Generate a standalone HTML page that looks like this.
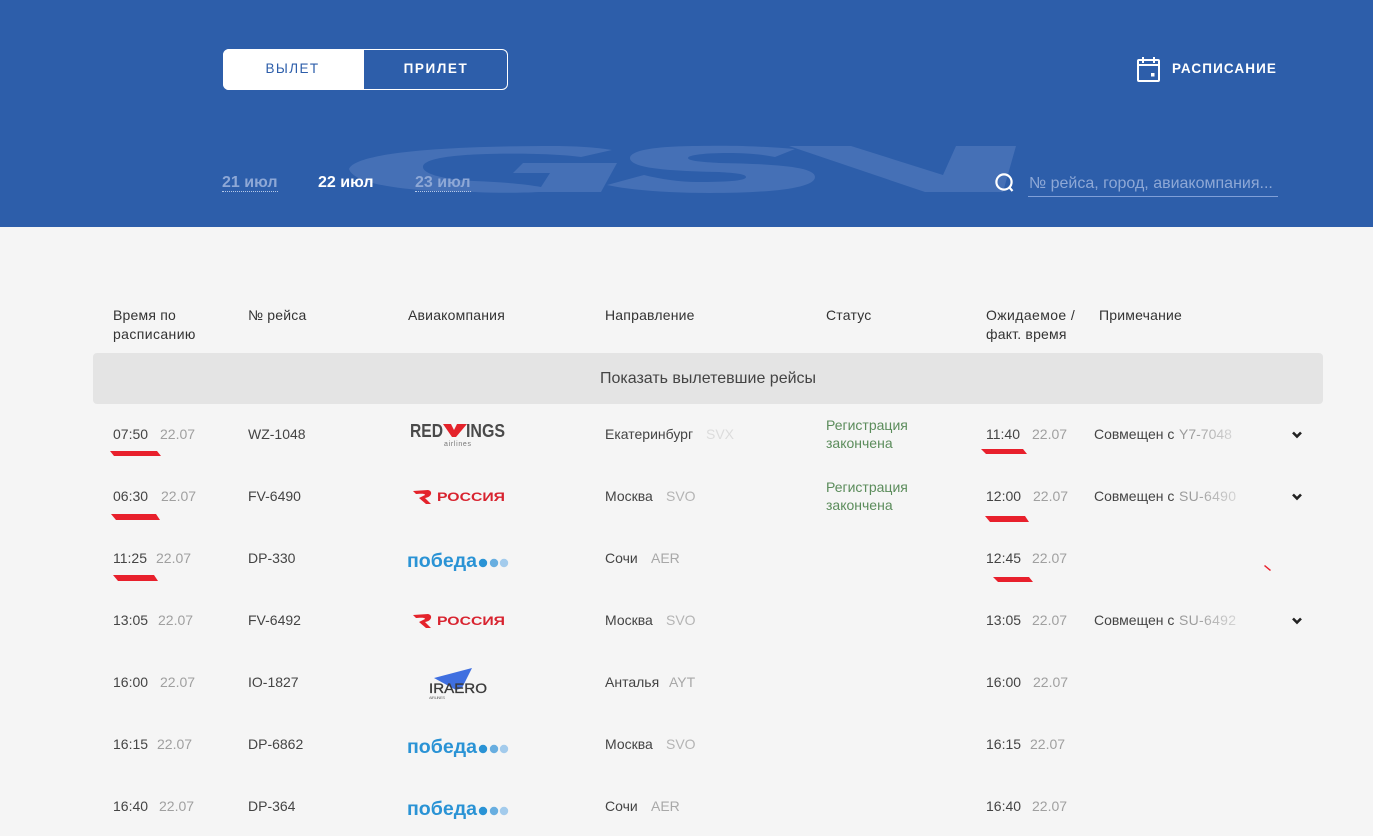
<!DOCTYPE html>
<html lang="ru"><head><meta charset="utf-8"><title>Табло</title>
<style>
html,body{margin:0;padding:0;background:#f5f5f5}
body{width:1373px;height:836px;overflow:hidden;position:relative;font-family:"Liberation Sans",sans-serif;font-size:14px;color:#444}
.a{position:absolute;white-space:nowrap;line-height:18px}
.g{color:#a0a0a0}.h{color:#333;letter-spacing:.2px}
.st{color:#5b8c5b}
.n{background:linear-gradient(90deg,#9a9a9a 0,#9a9a9a 25%,#d4d4d4 100%);-webkit-background-clip:text;background-clip:text;color:transparent;letter-spacing:.3px}
svg{position:absolute;overflow:visible}
.d{font-size:16px;font-weight:bold;color:#8ea8d6;top:174px;line-height:17px;border-bottom:1px dotted #b5c8e8;height:17px}
</style></head><body>
<div style="position:absolute;left:0;top:0;width:1373px;height:227px;background:#2d5eaa"></div>
<svg style="left:0;top:0" width="1373" height="227"><path fill="#4570b6" d="M349 169C355 153 440 146 554 146C580 146 600 148 612 150L581 157C560 154 520 153 487 154C450 155 423 159 423 167C423 175 450 180 474 181C500 182 525 184 541 187L550 173L513 173L523 163L617 163L601 192L539 192C520 193 495 193 474 192C430 192 355 188 349 169Z"/><path fill="#4570b6" d="M630 158C630 149 665 146 697 146C740 145 770 147 795 149L775 157C760 154 745 153 728 153C705 153 688 155 688 158C688 161 703 162 719 163C770 164 815 166 815 177C815 189 765 193 710 193C665 193 630 190 607 185L644 175C660 179 680 182 697 182C725 182 746 181 746 177C746 174 735 173 719 172C675 171 630 169 630 158Z"/><path fill="#4570b6" d="M789 146L851 146L943 175L956 146L1016 146L1003 192L925 192Z"/></svg>

<div style="position:absolute;left:223px;top:49px;width:285px;height:41px;box-sizing:border-box;border:1px solid #fff;border-radius:6px"></div>
<div style="position:absolute;left:223px;top:49px;width:141px;height:41px;background:#fff;border-radius:6px 0 0 6px"></div>
<div class="a" style="left:223px;top:60px;width:139px;text-align:center;color:#2d5eaa;font-size:13.5px;letter-spacing:1.4px">ВЫЛЕТ</div>
<div class="a" style="left:364px;top:60px;width:144px;text-align:center;color:#fff;font-size:13.5px;font-weight:bold;letter-spacing:1.6px">ПРИЛЕТ</div>

<svg style="left:1137px;top:57px" width="24" height="26" fill="none" stroke="#fff" stroke-width="2"><rect x="1" y="3" width="21" height="21" rx="1"/><path d="M1 8H22M6 0V6M17 0V6"/><rect x="14" y="16" width="3.5" height="3.5" fill="#fff" stroke="none"/></svg>
<div class="a" style="left:1172px;top:60px;color:#fff;font-size:13.5px;font-weight:bold;letter-spacing:1.1px">РАСПИСАНИЕ</div>

<div class="a d" style="left:222px;width:56px">21 июл</div>
<div class="a d" style="left:318px;color:#fff;border:0">22 июл</div>
<div class="a d" style="left:415px;width:56px">23 июл</div>

<svg style="left:995px;top:173px" width="20" height="20" fill="none" stroke="#fff" stroke-width="2.2"><circle cx="9" cy="9" r="7.6"/><path d="M14 14L17.5 18"/></svg>
<div class="a" style="left:1029px;top:175px;color:#8ea8d6;font-size:16px">№ рейса, город, авиакомпания...</div>
<div style="position:absolute;left:1028px;top:196px;width:250px;height:1px;background:#7f9fd8"></div>

<div class="a h" style="left:113px;top:306px">Время по</div><div class="a h" style="left:113px;top:325px;letter-spacing:.4px">расписанию</div>
<div class="a h" style="left:248px;top:306px">№ рейса</div>
<div class="a h" style="left:408px;top:306px">Авиакомпания</div>
<div class="a h" style="left:605px;top:306px">Направление</div>
<div class="a h" style="left:826px;top:306px">Статус</div>
<div class="a h" style="left:986px;top:306px;letter-spacing:.4px">Ожидаемое /</div><div class="a h" style="left:986px;top:325px">факт. время</div>
<div class="a h" style="left:1099px;top:306px">Примечание</div>

<div style="position:absolute;left:93px;top:353px;width:1230px;height:51px;background:#e4e4e4;border-radius:4px"></div>
<div class="a" style="left:93px;top:370px;width:1230px;text-align:center;font-size:16px;color:#444">Показать вылетевшие рейсы</div>

<!-- rows -->
<div class="a" style="left:113px;top:425px">07:50</div><div class="a g" style="left:160px;top:425px">22.07</div><div class="a" style="left:248px;top:425px">WZ-1048</div>
<div class="a" style="left:605px;top:425px">Екатеринбург</div><div class="a" style="left:706px;top:425px;color:#dcdcdc">SVX</div>
<div class="a st" style="left:826px;top:416px">Регистрация</div><div class="a st" style="left:826px;top:434px">закончена</div>
<div class="a" style="left:986px;top:425px">11:40</div><div class="a g" style="left:1032px;top:425px">22.07</div>
<div class="a" style="left:1094px;top:425px">Совмещен с</div><div class="a n" style="left:1179px;top:425px;letter-spacing:0">Y7-7048</div>

<div class="a" style="left:113px;top:487px">06:30</div><div class="a g" style="left:161px;top:487px">22.07</div><div class="a" style="left:248px;top:487px">FV-6490</div>
<div class="a" style="left:605px;top:487px">Москва</div><div class="a" style="left:666px;top:487px;color:#b4b4b4">SVO</div>
<div class="a st" style="left:826px;top:478px">Регистрация</div><div class="a st" style="left:826px;top:496px">закончена</div>
<div class="a" style="left:986px;top:487px">12:00</div><div class="a g" style="left:1033px;top:487px">22.07</div>
<div class="a" style="left:1094px;top:487px">Совмещен с</div><div class="a n" style="left:1179px;top:487px">SU-6490</div>

<div class="a" style="left:113px;top:549px">11:25</div><div class="a g" style="left:156px;top:549px">22.07</div><div class="a" style="left:248px;top:549px">DP-330</div>
<div class="a" style="left:605px;top:549px">Сочи</div><div class="a" style="left:651px;top:549px;color:#a8a8a8">AER</div>
<div class="a" style="left:986px;top:549px">12:45</div><div class="a g" style="left:1032px;top:549px">22.07</div>

<div class="a" style="left:113px;top:611px">13:05</div><div class="a g" style="left:158px;top:611px">22.07</div><div class="a" style="left:248px;top:611px">FV-6492</div>
<div class="a" style="left:605px;top:611px">Москва</div><div class="a" style="left:666px;top:611px;color:#b4b4b4">SVO</div>
<div class="a" style="left:986px;top:611px">13:05</div><div class="a g" style="left:1032px;top:611px">22.07</div>
<div class="a" style="left:1094px;top:611px">Совмещен с</div><div class="a n" style="left:1179px;top:611px">SU-6492</div>

<div class="a" style="left:113px;top:673px">16:00</div><div class="a g" style="left:160px;top:673px">22.07</div><div class="a" style="left:248px;top:673px">IO-1827</div>
<div class="a" style="left:605px;top:673px">Анталья</div><div class="a" style="left:669px;top:673px;color:#a8a8a8">AYT</div>
<div class="a" style="left:986px;top:673px">16:00</div><div class="a g" style="left:1033px;top:673px">22.07</div>

<div class="a" style="left:113px;top:735px">16:15</div><div class="a g" style="left:157px;top:735px">22.07</div><div class="a" style="left:248px;top:735px">DP-6862</div>
<div class="a" style="left:605px;top:735px">Москва</div><div class="a" style="left:666px;top:735px;color:#b4b4b4">SVO</div>
<div class="a" style="left:986px;top:735px">16:15</div><div class="a g" style="left:1030px;top:735px">22.07</div>

<div class="a" style="left:113px;top:797px">16:40</div><div class="a g" style="left:159px;top:797px">22.07</div><div class="a" style="left:248px;top:797px">DP-364</div>
<div class="a" style="left:605px;top:797px">Сочи</div><div class="a" style="left:651px;top:797px;color:#a8a8a8">AER</div>
<div class="a" style="left:986px;top:797px">16:40</div><div class="a g" style="left:1032px;top:797px">22.07</div>

<!-- red marks -->
<svg style="left:0;top:0" width="1373" height="836" fill="#e8202c">
<path d="M110 451L157 451L161 456L114 456Z"/><path d="M111 514L156 514L160 520L116 520Z"/><path d="M113 575L154 575L158 581L118 581Z"/>
<path d="M981 449L1023 449L1027 454L986 454Z"/><path d="M985 516L1025 516L1029 522L990 522Z"/><path d="M993 577L1029 577L1033 582L998 582Z"/>
<path d="M1265 565L1271 570L1270 571L1264 566Z"/>
</svg>

<!-- chevrons -->
<svg style="left:1292px;top:431px" width="10" height="8" fill="none" stroke="#222" stroke-width="2.6"><path d="M1 1.5L5 5.5L9 1.5"/></svg>
<svg style="left:1292px;top:493px" width="10" height="8" fill="none" stroke="#222" stroke-width="2.6"><path d="M1 1.5L5 5.5L9 1.5"/></svg>
<svg style="left:1292px;top:617px" width="10" height="8" fill="none" stroke="#222" stroke-width="2.6"><path d="M1 1.5L5 5.5L9 1.5"/></svg>

<!-- logos -->
<svg style="left:0;top:0" width="1373" height="836" font-family="Liberation Sans, sans-serif">
<text x="410" y="437" font-size="18" font-weight="bold" fill="#4a4a4a" textLength="33" lengthAdjust="spacingAndGlyphs">RED</text>
<path fill="#e4232b" d="M443 424L451 424L454 430L457 424L467 424L456 437L452 437Z"/>
<text x="466" y="437" font-size="18" font-weight="bold" fill="#4a4a4a" textLength="39" lengthAdjust="spacingAndGlyphs">INGS</text>
<text x="444" y="446" font-size="7" fill="#777" textLength="27">airlines</text>

<path fill="#e4232b" d="M413 491L428 490C433 491 432 497 425 498L431 504L426 504L419 498L425 495C425 493 418 494 416 494Z"/>
<text x="437" y="501" font-size="11.5" font-weight="bold" fill="#d8232f" textLength="68" lengthAdjust="spacingAndGlyphs">РОССИЯ</text>
<path fill="#e4232b" d="M413 615L428 614C433 615 432 621 425 622L431 628L426 628L419 622L425 619C425 617 418 618 416 618Z"/>
<text x="437" y="625" font-size="11.5" font-weight="bold" fill="#d8232f" textLength="68" lengthAdjust="spacingAndGlyphs">РОССИЯ</text>

<text x="407" y="567" font-size="19" font-weight="bold" fill="#2a93d5" textLength="70" lengthAdjust="spacingAndGlyphs">победа</text>
<circle cx="483" cy="563" r="4.2" fill="#2a93d5"/><circle cx="494" cy="563" r="4.2" fill="#68aee0"/><circle cx="504" cy="563" r="4.2" fill="#a3cbec"/>
<text x="407" y="753" font-size="19" font-weight="bold" fill="#2a93d5" textLength="70" lengthAdjust="spacingAndGlyphs">победа</text>
<circle cx="483" cy="749" r="4.2" fill="#2a93d5"/><circle cx="494" cy="749" r="4.2" fill="#68aee0"/><circle cx="504" cy="749" r="4.2" fill="#a3cbec"/>
<text x="407" y="815" font-size="19" font-weight="bold" fill="#2a93d5" textLength="70" lengthAdjust="spacingAndGlyphs">победа</text>
<circle cx="483" cy="811" r="4.2" fill="#2a93d5"/><circle cx="494" cy="811" r="4.2" fill="#68aee0"/><circle cx="504" cy="811" r="4.2" fill="#a3cbec"/>

<path fill="#3f6fe0" d="M434 678L472 668L462 688L456 690Z"/>
<text x="429" y="693" font-size="13.5" fill="#3a3a3a" stroke="#3a3a3a" stroke-width=".3" textLength="58" lengthAdjust="spacingAndGlyphs">IRAERO</text>
<text x="429" y="699" font-size="4" fill="#666" textLength="16">AIRLINES</text>
</svg>
</body></html>
